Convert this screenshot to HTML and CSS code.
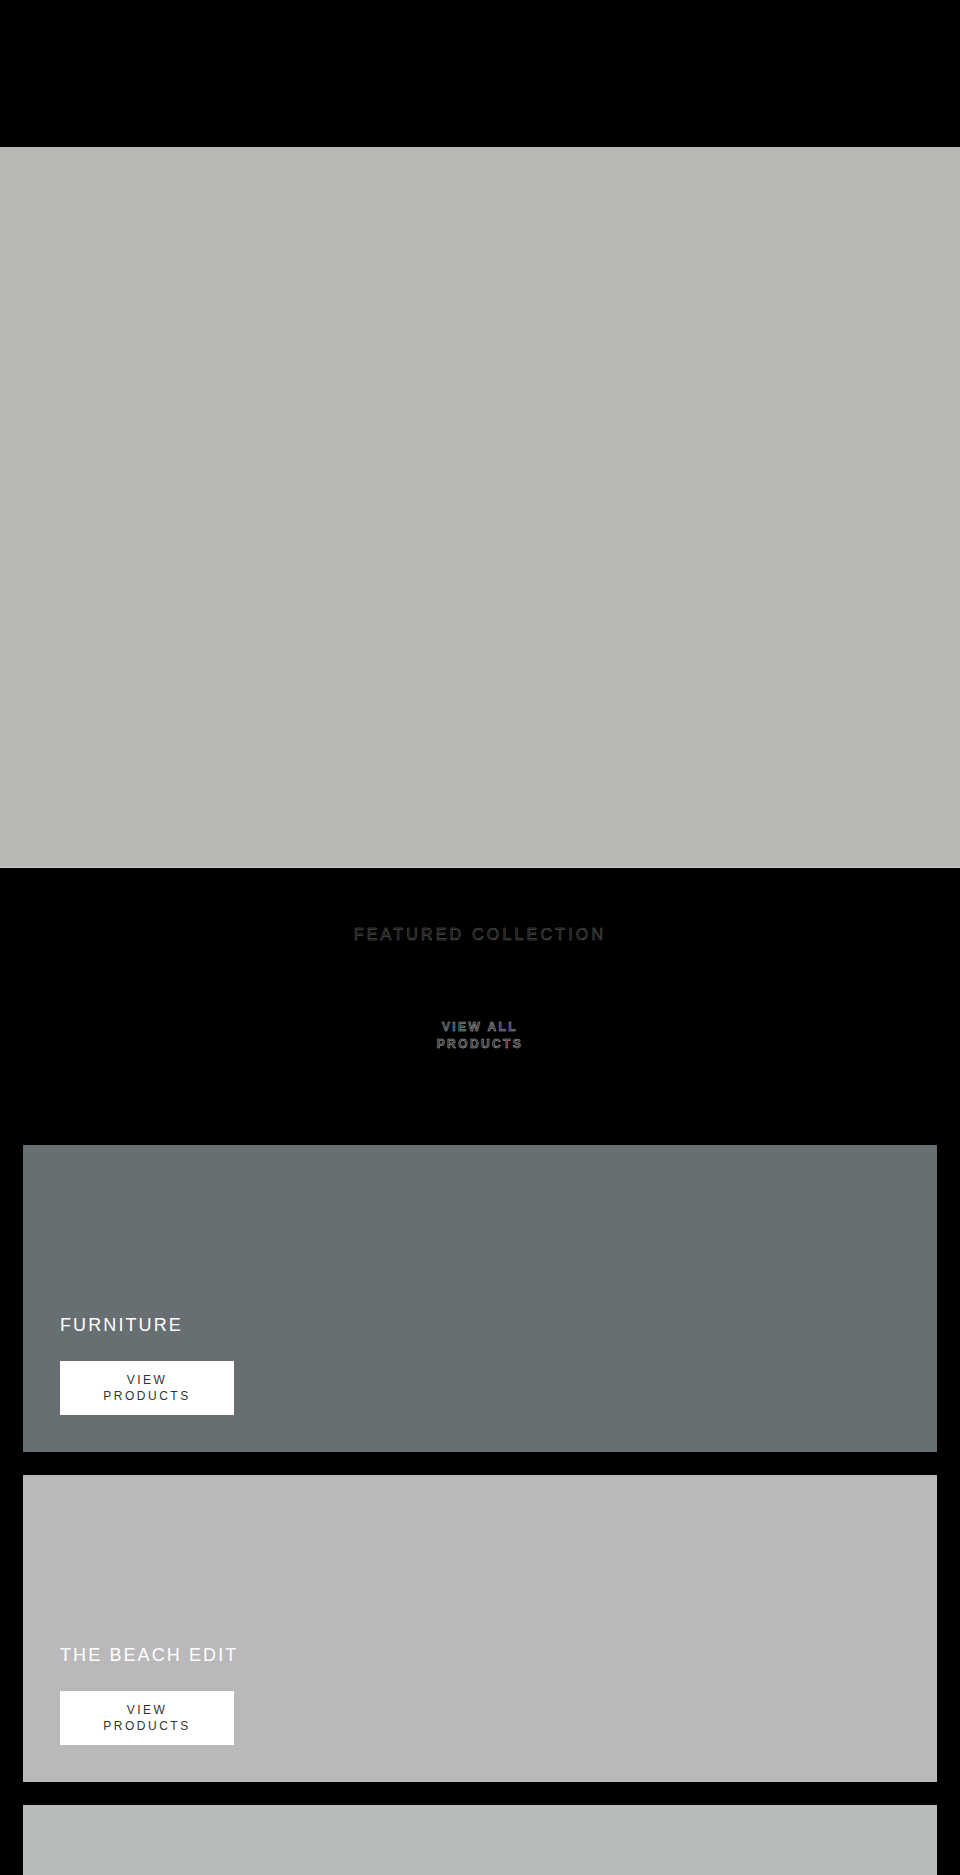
FILE: index.html
```html
<!DOCTYPE html>
<html lang="en">
<head>
<meta charset="utf-8">
<title>Featured Collection</title>
<link rel="stylesheet" href="styles.css">
</head>
<body>
  <header class="site-header"></header>
  <section class="hero"></section>
  <section class="featured">
    <h2 class="featured-title">FEATURED COLLECTION</h2>
    <a class="view-all" href="#">VIEW ALL PRODUCTS</a>
  </section>
  <section class="collections">
    <article class="collection collection--furniture">
      <h3 class="collection-title">FURNITURE</h3>
      <a class="collection-btn" href="#">VIEW PRODUCTS</a>
    </article>
    <article class="collection collection--beach">
      <h3 class="collection-title">THE BEACH EDIT</h3>
      <a class="collection-btn" href="#">VIEW PRODUCTS</a>
    </article>
    <article class="collection collection--third"></article>
  </section>
</body>
</html>
```

FILE: styles.css
```css
* { box-sizing: border-box; }

html, body {
  margin: 0;
  padding: 0;
  background: #000;
  font-family: "Liberation Sans", Arial, sans-serif;
}

.site-header {
  height: 147px;
  background: #000;
}

.hero {
  height: 721px;
  background: #b8b7b3;
  border-bottom: 1px solid #c9cac5;
}

.featured {
  display: flex;
  flex-direction: column;
  align-items: center;
  padding: 57px 0 93px;
}

.featured-title {
  margin: 0;
  font-size: 16px;
  line-height: 20px;
  font-weight: normal;
  letter-spacing: 3.2px;
  color: #0a0a0a;
  -webkit-text-stroke: 0.5px #666;
}

.view-all {
  display: block;
  width: 100px;
  margin-top: 74px;
  text-align: center;
  font-size: 12px;
  line-height: 16.7px;
  letter-spacing: 2.4px;
  font-weight: bold;
  color: #2a2a2a;
  -webkit-text-stroke: 0.5px #b0b0b0;
  text-decoration: none;
}

.collections {
  display: flex;
  flex-direction: column;
  gap: 23px;
  padding: 0 23px;
}

.collection {
  height: 307px;
  display: flex;
  flex-direction: column;
  justify-content: flex-end;
  align-items: flex-start;
  padding: 0 37px 37px;
}

.collection--furniture { background: #686f72; }
.collection--beach { background: #bab8bb; }
.collection--third { background: #b6bab9; }

.collection-title {
  margin: 0 0 24px;
  font-size: 18px;
  line-height: 24px;
  font-weight: normal;
  letter-spacing: 2.1px;
  color: #fff;
}

.collection-btn {
  display: block;
  width: 174px;
  padding: 10.5px 40px;
  background: #fff;
  color: #333;
  text-align: center;
  font-size: 12px;
  line-height: 16.5px;
  letter-spacing: 2.5px;
  text-decoration: none;
}
```
